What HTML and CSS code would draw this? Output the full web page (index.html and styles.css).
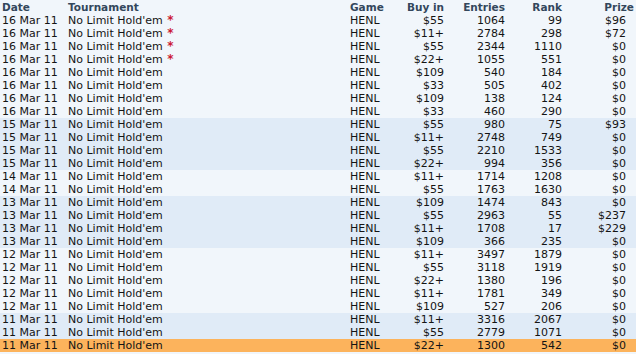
FILE: index.html
```html
<!DOCTYPE html>
<html lang="en">
<head>
    <meta charset="UTF-8">
    <meta name="viewport" content="width=device-width, initial-scale=1.0">
    <title>Tournament History</title>
    <link rel="stylesheet" href="styles.css">
</head>
<body>
    <table class="history">
        <thead>
            <tr>
                <th class="col-date">Date</th>
                <th class="col-name">Tournament</th>
                <th class="col-game">Game</th>
                <th class="col-buyin num">Buy in</th>
                <th class="col-entries num">Entries</th>
                <th class="col-rank num">Rank</th>
                <th class="col-prize num">Prize</th>
            </tr>
        </thead>
        <tbody>
            <tr class="day-a"><td>16 Mar 11</td><td>No Limit Hold'em <span class="star">*</span></td><td>HENL</td><td class="num">$55</td><td class="num">1064</td><td class="num">99</td><td class="num prize">$96</td></tr>
            <tr class="day-a"><td>16 Mar 11</td><td>No Limit Hold'em <span class="star">*</span></td><td>HENL</td><td class="num">$11+</td><td class="num">2784</td><td class="num">298</td><td class="num prize">$72</td></tr>
            <tr class="day-a"><td>16 Mar 11</td><td>No Limit Hold'em <span class="star">*</span></td><td>HENL</td><td class="num">$55</td><td class="num">2344</td><td class="num">1110</td><td class="num prize">$0</td></tr>
            <tr class="day-a"><td>16 Mar 11</td><td>No Limit Hold'em <span class="star">*</span></td><td>HENL</td><td class="num">$22+</td><td class="num">1055</td><td class="num">551</td><td class="num prize">$0</td></tr>
            <tr class="day-a"><td>16 Mar 11</td><td>No Limit Hold'em</td><td>HENL</td><td class="num">$109</td><td class="num">540</td><td class="num">184</td><td class="num prize">$0</td></tr>
            <tr class="day-a"><td>16 Mar 11</td><td>No Limit Hold'em</td><td>HENL</td><td class="num">$33</td><td class="num">505</td><td class="num">402</td><td class="num prize">$0</td></tr>
            <tr class="day-a"><td>16 Mar 11</td><td>No Limit Hold'em</td><td>HENL</td><td class="num">$109</td><td class="num">138</td><td class="num">124</td><td class="num prize">$0</td></tr>
            <tr class="day-a"><td>16 Mar 11</td><td>No Limit Hold'em</td><td>HENL</td><td class="num">$33</td><td class="num">460</td><td class="num">290</td><td class="num prize">$0</td></tr>
            <tr class="day-b"><td>15 Mar 11</td><td>No Limit Hold'em</td><td>HENL</td><td class="num">$55</td><td class="num">980</td><td class="num">75</td><td class="num prize">$93</td></tr>
            <tr class="day-b"><td>15 Mar 11</td><td>No Limit Hold'em</td><td>HENL</td><td class="num">$11+</td><td class="num">2748</td><td class="num">749</td><td class="num prize">$0</td></tr>
            <tr class="day-b"><td>15 Mar 11</td><td>No Limit Hold'em</td><td>HENL</td><td class="num">$55</td><td class="num">2210</td><td class="num">1533</td><td class="num prize">$0</td></tr>
            <tr class="day-b"><td>15 Mar 11</td><td>No Limit Hold'em</td><td>HENL</td><td class="num">$22+</td><td class="num">994</td><td class="num">356</td><td class="num prize">$0</td></tr>
            <tr class="day-a"><td>14 Mar 11</td><td>No Limit Hold'em</td><td>HENL</td><td class="num">$11+</td><td class="num">1714</td><td class="num">1208</td><td class="num prize">$0</td></tr>
            <tr class="day-a"><td>14 Mar 11</td><td>No Limit Hold'em</td><td>HENL</td><td class="num">$55</td><td class="num">1763</td><td class="num">1630</td><td class="num prize">$0</td></tr>
            <tr class="day-b"><td>13 Mar 11</td><td>No Limit Hold'em</td><td>HENL</td><td class="num">$109</td><td class="num">1474</td><td class="num">843</td><td class="num prize">$0</td></tr>
            <tr class="day-b"><td>13 Mar 11</td><td>No Limit Hold'em</td><td>HENL</td><td class="num">$55</td><td class="num">2963</td><td class="num">55</td><td class="num prize">$237</td></tr>
            <tr class="day-b"><td>13 Mar 11</td><td>No Limit Hold'em</td><td>HENL</td><td class="num">$11+</td><td class="num">1708</td><td class="num">17</td><td class="num prize">$229</td></tr>
            <tr class="day-b"><td>13 Mar 11</td><td>No Limit Hold'em</td><td>HENL</td><td class="num">$109</td><td class="num">366</td><td class="num">235</td><td class="num prize">$0</td></tr>
            <tr class="day-a"><td>12 Mar 11</td><td>No Limit Hold'em</td><td>HENL</td><td class="num">$11+</td><td class="num">3497</td><td class="num">1879</td><td class="num prize">$0</td></tr>
            <tr class="day-a"><td>12 Mar 11</td><td>No Limit Hold'em</td><td>HENL</td><td class="num">$55</td><td class="num">3118</td><td class="num">1919</td><td class="num prize">$0</td></tr>
            <tr class="day-a"><td>12 Mar 11</td><td>No Limit Hold'em</td><td>HENL</td><td class="num">$22+</td><td class="num">1380</td><td class="num">196</td><td class="num prize">$0</td></tr>
            <tr class="day-a"><td>12 Mar 11</td><td>No Limit Hold'em</td><td>HENL</td><td class="num">$11+</td><td class="num">1781</td><td class="num">349</td><td class="num prize">$0</td></tr>
            <tr class="day-a"><td>12 Mar 11</td><td>No Limit Hold'em</td><td>HENL</td><td class="num">$109</td><td class="num">527</td><td class="num">206</td><td class="num prize">$0</td></tr>
            <tr class="day-b"><td>11 Mar 11</td><td>No Limit Hold'em</td><td>HENL</td><td class="num">$11+</td><td class="num">3316</td><td class="num">2067</td><td class="num prize">$0</td></tr>
            <tr class="day-b"><td>11 Mar 11</td><td>No Limit Hold'em</td><td>HENL</td><td class="num">$55</td><td class="num">2779</td><td class="num">1071</td><td class="num prize">$0</td></tr>
            <tr class="day-b selected"><td>11 Mar 11</td><td>No Limit Hold'em</td><td>HENL</td><td class="num">$22+</td><td class="num">1300</td><td class="num">542</td><td class="num prize">$0</td></tr>
        </tbody>
    </table>
</body>
</html>
```

FILE: styles.css
```css
body {
    margin: 0;
    padding: 0;
    background-color: #f1f6fb;
    font-family: "DejaVu Sans", Verdana, sans-serif;
    font-size: 11px;
    color: #141414;
}
.history {
    width: 636px;
    border-collapse: collapse;
    table-layout: fixed;
}
.history th,
.history td {
    padding: 0 0 0 2px;
    white-space: nowrap;
    text-align: left;
    height: 13px;
    line-height: 13px;
}
.history th {
    font-weight: bold;
    font-size: 10.5px;
    color: #33475c;
    height: 14px;
    line-height: 14px;
}
.history .num {
    text-align: right;
    padding: 0 2px 0 0;
}
.history .prize {
    padding-right: 10px;
}
.col-date {
    width: 64px;
}
.col-name {
    width: 280px;
}
.col-game {
    width: 50px;
}
.col-buyin {
    width: 44px;
}
.col-entries {
    width: 59px;
}
.col-rank {
    width: 55px;
}
.col-prize {
    width: 70px;
}
.day-a {
    background-color: #f1f6fb;
}
.day-b {
    background-color: #e0ebf7;
}
.selected {
    background-color: #fcb35c;
}
.star {
    color: #cc1a33;
    font-weight: bold;
    font-size: 12px;
    margin-left: 1px;
}
```
